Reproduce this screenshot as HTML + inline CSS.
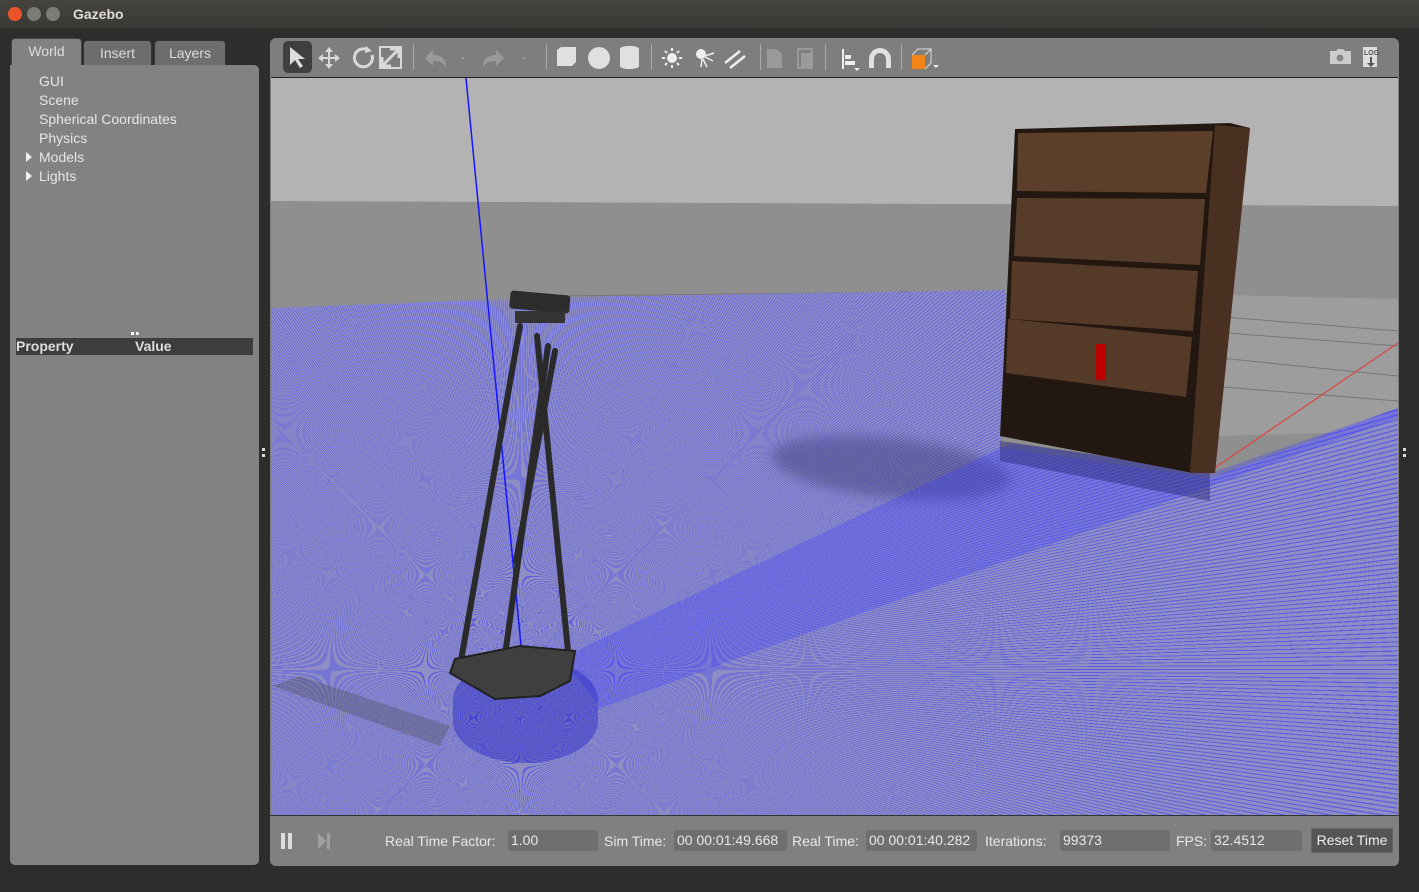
<!DOCTYPE html>
<html><head><meta charset="utf-8"><style>
*{margin:0;padding:0;box-sizing:border-box}
body{width:1419px;height:892px;background:#2d2d2d;font-family:"Liberation Sans","DejaVu Sans",sans-serif;position:relative;overflow:hidden}
.title{position:absolute;left:0;top:0;width:1419px;height:28px;background:linear-gradient(#45443f,#3a3935);}
.title .t{position:absolute;left:73px;top:6px;color:#dfdbd2;font-weight:bold;font-size:14px}
.btn{position:absolute;top:7px;width:14px;height:14px;border-radius:50%}
.tab{position:absolute;top:40px;height:26px;background:#6d6d6d;border:1px solid #333;border-bottom:none;border-radius:4px 4px 0 0;color:#ddd;font-size:14px;text-align:center;line-height:24px}
.left{position:absolute;left:10px;top:65px;width:249px;height:800px;background:#828282;border-radius:0 5px 5px 5px}
.item{position:absolute;left:29px;color:#e6e6e6;font-size:14px}
.tri{position:absolute;left:16px;width:0;height:0;border-left:6px solid #eee;border-top:5px solid transparent;border-bottom:5px solid transparent}
.right{position:absolute;left:270px;top:38px;width:1129px;height:828px;background:#7e7e7e;border-radius:6px;overflow:hidden}
.vp{position:absolute;left:1px;top:39px;width:1127px;height:738px;background:#b3b3b3;overflow:hidden;border-top:1px solid #222}
.bar{position:absolute;left:0;top:777px;width:1129px;height:51px;background:#808080;border-top:1px solid #333}
.lbl{position:absolute;top:17px;color:#e8e8e8;font-size:14px}
.fld{position:absolute;top:14px;height:21px;background:#6f6f6f;border-radius:3px;color:#e8e8e8;font-size:14px;padding-left:3px;line-height:21px}
</style></head><body>
<div class="title">
<div class="btn" style="left:8px;background:#e9542b"></div>
<div class="btn" style="left:27px;background:#7c7b76"></div>
<div class="btn" style="left:46px;background:#7c7b76"></div>
<div class="t">Gazebo</div>
</div>
<div class="tab" style="left:11px;width:71px;background:#828282;top:38px;height:28px;border-color:#444">World</div>
<div class="tab" style="left:83px;width:69px">Insert</div>
<div class="tab" style="left:154px;width:72px">Layers</div>
<div class="left">
<div class="item" style="top:8px">GUI</div>
<div class="item" style="top:27px">Scene</div>
<div class="item" style="top:46px">Spherical Coordinates</div>
<div class="item" style="top:65px">Physics</div>
<div class="tri" style="top:87px"></div><div class="item" style="top:84px">Models</div>
<div class="tri" style="top:106px"></div><div class="item" style="top:103px">Lights</div>
<div style="position:absolute;left:121px;top:267px;width:8px;height:3px;border-top:3px dotted #fff"></div>
<div style="position:absolute;left:6px;top:273px;width:237px;height:17px;background:#3d3d3d;color:#ddd;font-weight:bold;font-size:14px;line-height:17px"><span style="position:absolute;left:0">Property</span><span style="position:absolute;left:119px">Value</span></div>
</div>
<div style="position:absolute;left:262px;top:448px;width:3px;height:9px;border-left:3px dotted #ddd"></div>
<div style="position:absolute;left:1403px;top:448px;width:3px;height:9px;border-left:3px dotted #ddd"></div>

<div class="right">
<svg width="1129" height="39" style="position:absolute;left:0;top:0" fill="#d8d8d8" stroke="none">
<rect x="13" y="3" width="29" height="32" rx="5" fill="#3f3f3f"/>
<path d="M20 9 L20 27 L25 22 L30 30 L33 28 L28 21 L35 21 Z" fill="#ddd"/>
<path d="M59 9 l4 5h-3v5h5v-3l5 4-5 4v-3h-5v5h3l-4 5-4-5h3v-5h-5v3l-5-4 5-4v3h5v-5h-3z"/>
<path d="M98 12a9 9 0 1 0 4 5" fill="none" stroke="#d8d8d8" stroke-width="3"/><path d="M96 8l6 5-7 2z"/>
<rect x="110" y="9" width="21" height="21" fill="none" stroke="#d8d8d8" stroke-width="2"/><path d="M113 27l15-15M120 11h9v9M112 19v9h9" fill="none" stroke="#d8d8d8" stroke-width="3"/>
<rect x="143" y="6" width="1" height="26" fill="#aaa"/>
<path d="M155 20l8-8v5c9 0 13 5 13 12-3-5-7-6-13-6v5z" fill="#9a9a9a"/>
<path d="M191 19l4 0-2 3z" fill="#999"/>
<path d="M234 20l-8-8v5c-9 0-13 5-13 12 3-5 7-6 13-6v5z" fill="#9a9a9a"/>
<path d="M252 19l4 0-2 3z" fill="#999"/>
<rect x="276" y="6" width="1" height="26" fill="#aaa"/>
<path d="M287 12l4-3h15v15l-4 4h-15z" fill="#e0e0e0"/>
<circle cx="329" cy="20" r="11" fill="#e0e0e0"/>
<path d="M350 11a9 3 0 0 1 19 0v17a9 3 0 0 1-19 0z" fill="#e0e0e0"/>
<rect x="381" y="6" width="1" height="26" fill="#aaa"/>
<circle cx="402" cy="20" r="5" fill="#eee"/><path d="M402 10v3M402 27v3M392 20h3M409 20h3M395 13l2 2M407 25l2 2M395 27l2-2M407 15l2-2" stroke="#eee" stroke-width="2"/>
<circle cx="431" cy="16" r="5" fill="#eee"/><path d="M435 18l9-3M435 19l8 4M433 21l4 8M432 21l-1 8" stroke="#eee" stroke-width="1.5"/>
<path d="M455 25l15-12M460 30l15-12" stroke="#eee" stroke-width="2.5"/>
<rect x="490" y="6" width="1" height="26" fill="#aaa"/>
<path d="M497 11h10l5 5v14h-15z" fill="#9a9a9a"/>
<path d="M528 11h14v19h-14z" fill="none" stroke="#9a9a9a" stroke-width="2"/><rect x="531" y="15" width="11" height="14" fill="#9a9a9a"/>
<rect x="555" y="6" width="1" height="26" fill="#aaa"/>
<path d="M572 11v20h2v-20zM575 17h6v4h-6zM575 23h10v4h-10z" fill="#eee"/><path d="M584 30h6l-3 3z" fill="#eee"/>
<path d="M599 30v-9a11 11 0 0 1 22 0v9h-5v-9a6 6 0 0 0-12 0v9z" fill="#e0e0e0"/>
<rect x="631" y="6" width="1" height="26" fill="#aaa"/>
<rect x="642" y="17" width="13" height="14" fill="#f4841a"/><path d="M642 17l6-6h13v14l-6 6M655 17l6-6" fill="none" stroke="#ddd" stroke-width="1"/><path d="M663 27h6l-3 3z" fill="#eee"/>
<path d="M1060 13h6l2-2h5l2 2h6v13h-21z" fill="#ccc"/><circle cx="1070" cy="20" r="3.5" fill="#888"/>
<path d="M1093 9h14v20h-14z" fill="#ddd"/><text x="1094" y="17" font-size="7" font-weight="bold" fill="#555" font-family="Liberation Sans">LOG</text><path d="M1100 19v6h-3l4 4 4-4h-3v-6z" fill="#555"/>
</svg>
<div class="vp">
<svg width="1127" height="738" viewBox="271 77 1127 738" style="position:absolute;left:0;top:0">
<polygon points="271,200 1398,205 1398,815 271,815" fill="#8f8f8f"/>
<polygon points="1040,290 1398,298 1398,430 1040,440" fill="#9d9d9d"/>
<g stroke="#777" stroke-width="1"><path d="M1200 330 L1398 345M1200 355L1398 375M1210 385L1398 400M900 290L1398 330M560 295L1000 290"/></g>
<path d="M1210 470 L1398 342" stroke="#e33" stroke-width="1"/>
</svg>
<div style="position:absolute;left:0;top:0;width:1127px;height:738px;clip-path:polygon(0 230px,300px 219px,735px 212px,730px 370px,940px 400px,1127px 330px,1127px 738px,0 738px);background:repeating-conic-gradient(from 0deg at 250px 592px,#8e8ec4 0deg 0.22deg,#5c5ce4 0.22deg 0.3deg)"></div>
<div style="position:absolute;left:500px;top:360px;width:240px;height:60px;border-radius:50%;background:rgba(40,40,90,0.35);filter:blur(6px);transform:rotate(6deg)"></div>
<div style="position:absolute;left:0;top:0;width:1127px;height:738px;clip-path:polygon(290px 580px,740px 365px,940px 395px,1127px 330px,1127px 340px,330px 630px);background:rgba(60,60,255,0.3)"></div>
<div style="position:absolute;left:182px;top:580px;width:145px;height:105px;border-radius:50%/40%;background:rgba(40,40,200,0.45)"></div>
<svg width="1127" height="738" viewBox="271 77 1127 738" style="position:absolute;left:0;top:0">
<path d="M466 77 L523 665" stroke="#1515ff" stroke-width="1.5"/>
<path d="M272 685 L440 745 L450 725 L300 675 Z" fill="#444" opacity="0.3"/>
<polygon points="1000,440 1210,470 1210,500 1000,460" fill="rgba(40,40,120,0.45)"/>
<polygon points="1015,128 1230,122 1250,127 1215,470 1193,472 1000,435" fill="#231811"/>
<polygon points="1215,124 1250,127 1215,472 1190,472" fill="#4a3020"/>
<polygon points="1018,132 1213,130 1206,192 1017,190" fill="#5b3f2b"/>
<polygon points="1017,197 1205,198 1200,264 1014,255" fill="#573c29"/>
<polygon points="1012,260 1198,270 1193,330 1010,318" fill="#553a28"/>
<polygon points="1008,318 1192,336 1186,396 1006,372" fill="#553a28"/>
<rect x="1096" y="343" width="10" height="36" rx="2" fill="#b00"/>
<g stroke="#2a2a2a" stroke-linecap="round">
<path d="M520 325 L460 665" stroke-width="6"/>
<path d="M548 345 L500 690" stroke-width="6"/>
<path d="M537 335 L568 650" stroke-width="6"/>
<path d="M555 350 L516 560" stroke-width="6"/>
</g>
<polygon points="455,658 520,645 575,650 570,680 540,695 495,698 450,672" fill="#3f3f3f" stroke="#222" stroke-width="2"/>
<rect x="510" y="292" width="60" height="18" rx="3" fill="#2c2c2c" transform="rotate(5 540 300)"/>
<rect x="515" y="310" width="50" height="12" fill="#333"/>
</svg>
</div>
<div class="bar">
<div style="position:absolute;left:11px;top:17px;width:4px;height:16px;background:#ddd"></div>
<div style="position:absolute;left:18px;top:17px;width:4px;height:16px;background:#ddd"></div>
<div style="position:absolute;left:48px;top:17px;border-left:8px solid #a0a0a0;border-top:8px solid transparent;border-bottom:8px solid transparent"></div>
<div style="position:absolute;left:57px;top:17px;width:3px;height:16px;background:#a0a0a0"></div>
<div class="lbl" style="left:115px">Real Time Factor:</div><div class="fld" style="left:238px;width:90px">1.00</div>
<div class="lbl" style="left:334px">Sim Time:</div><div class="fld" style="left:404px;width:113px">00 00:01:49.668</div>
<div class="lbl" style="left:522px">Real Time:</div><div class="fld" style="left:596px;width:111px">00 00:01:40.282</div>
<div class="lbl" style="left:715px">Iterations:</div><div class="fld" style="left:790px;width:110px">99373</div>
<div class="lbl" style="left:906px">FPS:</div><div class="fld" style="left:941px;width:91px">32.4512</div>
<div style="position:absolute;left:1041px;top:12px;width:82px;height:25px;background:#555;border:1px solid #666;color:#eee;font-size:14px;text-align:center;line-height:23px">Reset Time</div>
</div>
</div>
</body></html>
